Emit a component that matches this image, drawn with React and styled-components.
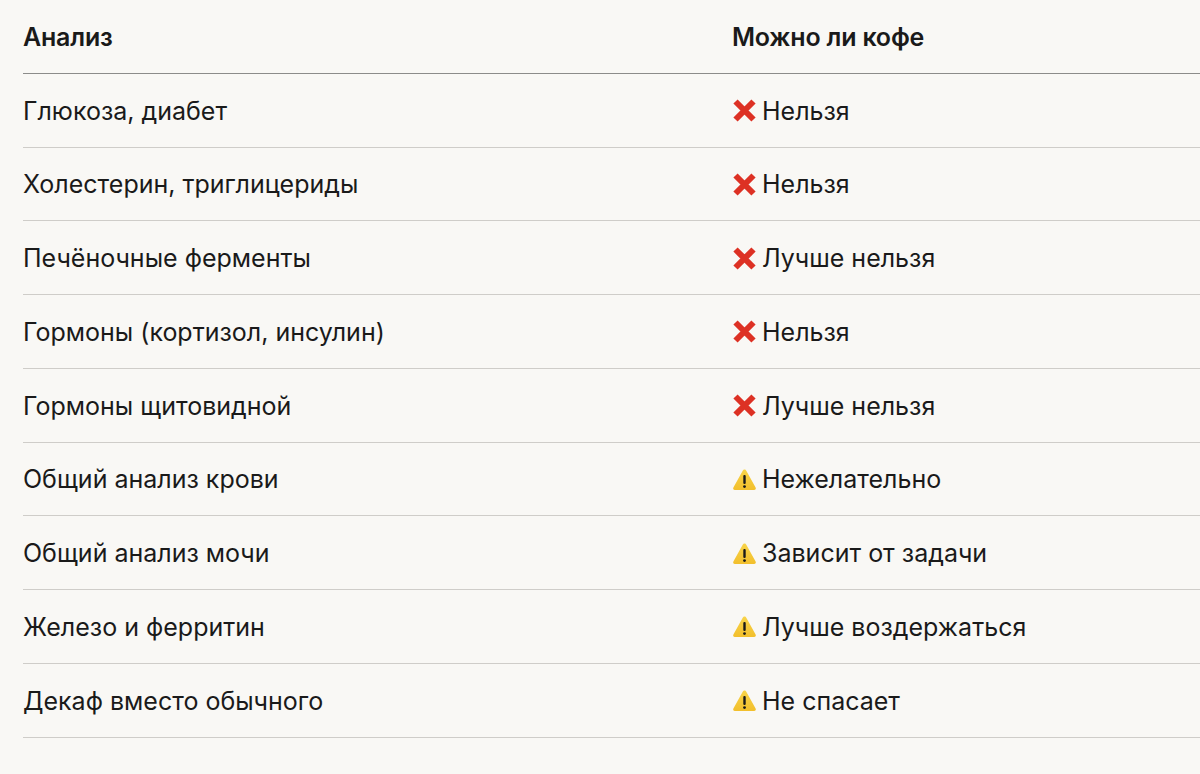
import React from 'react';
import styled, { createGlobalStyle } from 'styled-components';

const GlobalStyle = createGlobalStyle`
  html, body {
    margin: 0;
    padding: 0;
    background: #f9f8f5;
  }
  body {
    font-family: Inter, 'Liberation Sans', Arial, sans-serif;
    color: #1a1a1a;
  }
`;

const rows = [
  ['Глюкоза, диабет', 'no', 'Нельзя'],
  ['Холестерин, триглицериды', 'no', 'Нельзя'],
  ['Печёночные ферменты', 'no', 'Лучше нельзя'],
  ['Гормоны (кортизол, инсулин)', 'no', 'Нельзя'],
  ['Гормоны щитовидной', 'no', 'Лучше нельзя'],
  ['Общий анализ крови', 'warn', 'Нежелательно'],
  ['Общий анализ мочи', 'warn', 'Зависит от задачи'],
  ['Железо и ферритин', 'warn', 'Лучше воздержаться'],
  ['Декаф вместо обычного', 'warn', 'Не спасает'],
];

const Page = styled.div`
  padding: 0 0 0 23px;
  height: 774px;
  box-sizing: border-box;
`;

const Table = styled.div`
  display: flex;
  flex-direction: column;
`;

const Row = styled.div`
  display: grid;
  grid-template-columns: 709px 1fr;
  align-items: center;
  height: 72.75px;
  padding-top: ${p => (p.$head ? '2px' : '1px')};
  box-sizing: border-box;
  height: 73.75px;
  border-bottom: 1px solid ${p => (p.$head ? '#8c8c8a' : '#cfcdc9')};
  font-size: 25px;
  font-weight: ${p => (p.$head ? 600 : 400)};
  letter-spacing: ${p => (p.$head ? '-0.2px' : '0')};
`;

const Cell = styled.div`
  display: flex;
  align-items: center;
  gap: 5px;
  white-space: nowrap;
`;

const Icon = styled.svg`
  width: 25px;
  height: 25px;
  flex: none;
`;

const Cross = () => (
  <Icon viewBox="0 0 25 25">
    <path d="M3.5 3.5 L21.5 21.5 M21.5 3.5 L3.5 21.5" stroke="#dd3124" strokeWidth="6" strokeLinecap="butt" />
  </Icon>
);

const Warn = () => (
  <Icon viewBox="0 0 25 25">
    <defs>
      <linearGradient id="wg" x1="0" y1="0" x2="0" y2="1">
        <stop offset="0" stopColor="#f8d44a" />
        <stop offset="1" stopColor="#f2bf2c" />
      </linearGradient>
    </defs>
    <path d="M12.5 2.5 C13.3 2.5 13.9 3 14.3 3.7 L23.6 20.4 C24.3 21.6 23.5 23 22.1 23 L2.9 23 C1.5 23 0.7 21.6 1.4 20.4 L10.7 3.7 C11.1 3 11.7 2.5 12.5 2.5 Z" fill="url(#wg)" />
    <rect x="11.3" y="8" width="2.4" height="9" rx="1.1" fill="#1a1a1a" />
    <circle cx="12.5" cy="19.6" r="1.4" fill="#1a1a1a" />
  </Icon>
);

export default function App() {
  return (
    <Page>
      <GlobalStyle />
      <Table>
        <Row $head>
          <Cell>Анализ</Cell>
          <Cell>Можно ли кофе</Cell>
        </Row>
        {rows.map(([name, kind, verdict]) => (
          <Row key={name}>
            <Cell>{name}</Cell>
            <Cell>
              {kind === 'no' ? <Cross /> : <Warn />}
              {verdict}
            </Cell>
          </Row>
        ))}
      </Table>
    </Page>
  );
}
